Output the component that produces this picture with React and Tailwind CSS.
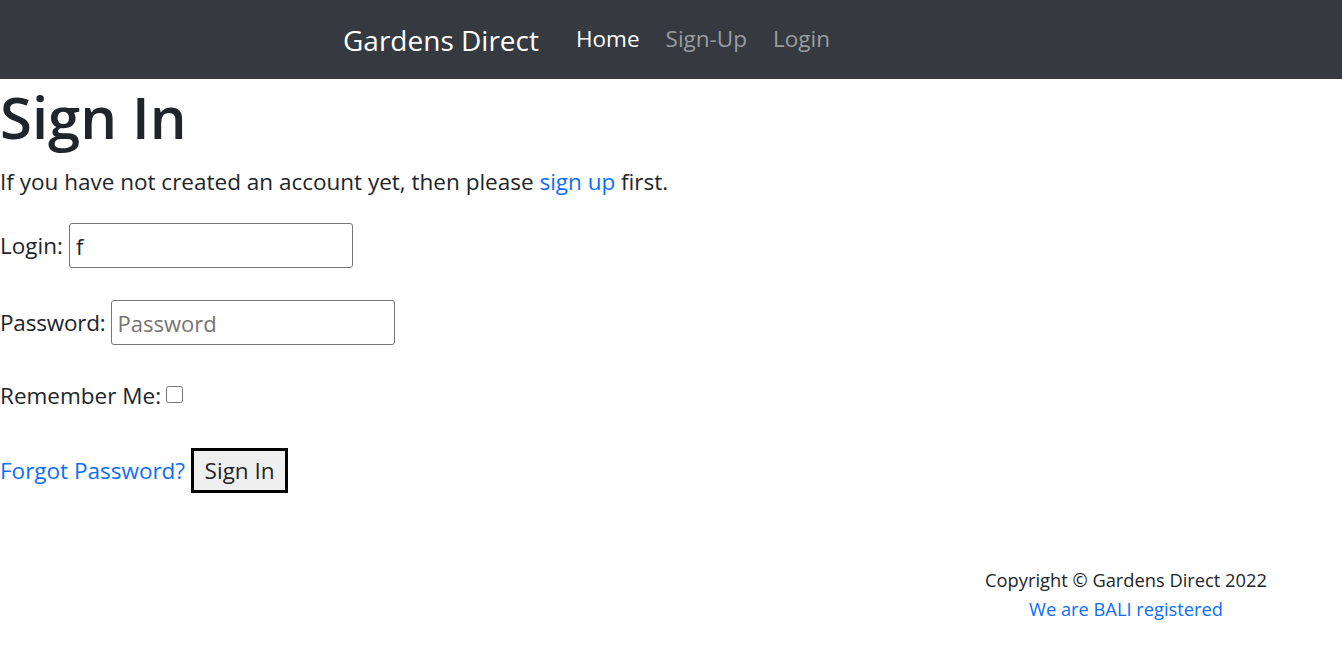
import React, { useState } from 'react';

const navLinks = [
  { label: 'Home', active: true },
  { label: 'Sign-Up', active: false },
  { label: 'Login', active: false },
];

function Navbar() {
  return (
    <nav className="h-[79px] bg-[#343a40] flex items-center pl-[343px]">
      <a href="#" className="text-[28px] text-white mr-[37px] leading-none">
        Gardens Direct
      </a>
      <ul className="flex gap-[26px] text-[22.5px] leading-none">
        {navLinks.map((link) => (
          <li key={link.label}>
            <a
              href="#"
              className={link.active ? 'text-white' : 'text-[#9a9da0]'}
            >
              {link.label}
            </a>
          </li>
        ))}
      </ul>
    </nav>
  );
}

function SignInForm() {
  const [login, setLogin] = useState('f');
  const [password, setPassword] = useState('');
  const [remember, setRemember] = useState(false);

  return (
    <form onSubmit={(e) => e.preventDefault()} className="flex flex-col">
      <div className="flex items-center h-[45px] mt-[26px]">
        <label htmlFor="login" className="mr-[6px]">Login:</label>
        <input
          id="login"
          value={login}
          onChange={(e) => setLogin(e.target.value)}
          className="w-[284px] h-[45px] border border-[#767676] rounded-[3px] px-[6px] text-[22px] outline-none"
        />
      </div>

      <div className="flex items-center h-[45px] mt-[32px]">
        <label htmlFor="password" className="mr-[5px] tracking-[-0.2px]">Password:</label>
        <input
          id="password"
          type="password"
          placeholder="Password"
          value={password}
          onChange={(e) => setPassword(e.target.value)}
          className="w-[284px] h-[45px] border border-[#767676] rounded-[3px] px-[6px] text-[22px] outline-none placeholder:text-[#757575]"
        />
      </div>

      <div className="flex items-center h-[30px] mt-[36px]">
        <label htmlFor="remember" className="mr-[5px]">Remember Me:</label>
        <input
          id="remember"
          type="checkbox"
          checked={remember}
          onChange={(e) => setRemember(e.target.checked)}
          className="w-[17px] h-[17px] -mt-[4px]"
        />
      </div>

      <div className="flex items-center h-[45px] mt-[37px]">
        <a href="#" className="text-[#0d6efd] mr-[6px]">Forgot Password?</a>
        <button
          type="submit"
          className="h-[45px] w-[97px] border-[3px] border-black bg-[#efefef] text-[22.5px]"
        >
          Sign In
        </button>
      </div>
    </form>
  );
}

export default function App() {
  return (
    <div className="min-h-screen bg-white text-[#212529] font-['Open_Sans',sans-serif]">
      <Navbar />
      <main className="text-[22.5px] leading-[30px]">
        <h1 className="text-[58px] leading-[72px] font-semibold mt-[2px]">Sign In</h1>
        <p className="mt-[14px]">
          If you have not created an account yet, then please{' '}
          <a href="#" className="text-[#0d6efd]">sign up</a> first.
        </p>
        <SignInForm />
      </main>
      <footer className="mt-[72px] ml-[926px] w-[400px] text-center text-[18.3px] leading-[29px]">
        <p>Copyright © Gardens Direct 2022</p>
        <a href="#" className="text-[#0d6efd]">We are BALI registered</a>
      </footer>
    </div>
  );
}
